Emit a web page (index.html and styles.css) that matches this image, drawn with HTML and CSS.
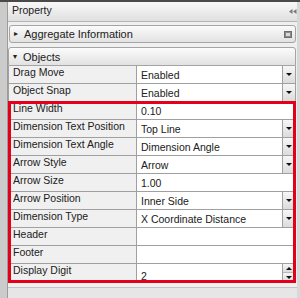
FILE: index.html
```html
<!DOCTYPE html>
<html lang="en">
<head>
    <meta charset="UTF-8">
    <title>Property</title>
    <link rel="stylesheet" href="styles.css">
</head>
<body>
    <div class="window">
        <div class="side"></div>
        <div class="panel">
            <div class="titlebar">
                <span>Property</span>
                <svg class="pin" width="8" height="5" viewBox="0 0 8 5"><path d="M0 2.5L3.5 0V5Z M4 2.5L7.5 0V5Z" fill="#7a7a7a"/></svg>
            </div>
            <div class="content">
                <div class="group">
                    <span class="caret">&#9656;</span>
                    <span class="group-title">Aggregate Information</span>
                    <svg class="restore" width="8" height="7" viewBox="0 0 8 7"><rect x="0.5" y="0.5" width="7" height="6" fill="#8c8c8c" stroke="#6e6e6e"/><rect x="2" y="2" width="4" height="3" fill="#d8d8d8"/></svg>
                </div>
                <div class="group open">
                    <span class="caret">&#9662;</span>
                    <span class="group-title">Objects</span>
                </div>
                <div class="grid">
                    <div class="row"><div class="name">Drag Move</div><div class="val">Enabled</div><div class="drop"><i class="down"></i></div></div>
                    <div class="row"><div class="name">Object Snap</div><div class="val">Enabled</div><div class="drop"><i class="down"></i></div></div>
                    <div class="marked">
                        <div class="row"><div class="name">Line Width</div><div class="val">0.10</div></div>
                        <div class="row"><div class="name">Dimension Text Position</div><div class="val">Top Line</div><div class="drop"><i class="down"></i></div></div>
                        <div class="row"><div class="name">Dimension Text Angle</div><div class="val">Dimension Angle</div><div class="drop"><i class="down"></i></div></div>
                        <div class="row"><div class="name">Arrow Style</div><div class="val">Arrow</div><div class="drop"><i class="down"></i></div></div>
                        <div class="row"><div class="name">Arrow Size</div><div class="val">1.00</div></div>
                        <div class="row"><div class="name">Arrow Position</div><div class="val">Inner Side</div><div class="drop"><i class="down"></i></div></div>
                        <div class="row"><div class="name">Dimension Type</div><div class="val">X Coordinate Distance</div><div class="drop"><i class="down"></i></div></div>
                        <div class="row"><div class="name">Header</div><div class="val"></div></div>
                        <div class="row"><div class="name">Footer</div><div class="val"></div></div>
                        <div class="row"><div class="name">Display Digit</div><div class="val low">2</div><div class="spin"><span><i class="up"></i></span><span><i class="down"></i></span></div></div>
                    </div>
                </div>
            </div>
            <div class="footer"></div>
        </div>
    </div>
</body>
</html>
```

FILE: styles.css
```css
* {
    box-sizing: border-box;
}
html,
body {
    margin: 0;
    padding: 0;
    width: 300px;
    height: 298px;
    overflow: hidden;
    background: #d8d8d8;
    font-family: 'Liberation Sans', Arial, sans-serif;
    font-size: 10.5px;
    color: #202020;
}
.window {
    display: flex;
    height: 298px;
    border-top: 2px solid #4a4a4a;
}
.side {
    width: 8px;
    background: #cbcbcb;
    border-right: 1px solid #9c9c9c;
}
.panel {
    width: 289px;
    display: flex;
    flex-direction: column;
    background: #f0f0f0;
}
.titlebar {
    height: 20px;
    display: flex;
    align-items: flex-start;
    justify-content: space-between;
    padding: 0 0 0 4px;
    line-height: 16px;
    background: linear-gradient(#f8f8f8, #e0e0e0);
    border-bottom: 1px solid #b4b4b4;
}
.titlebar .pin {
    margin: 7px 0 0 0;
}
.content {
    padding: 3px 1px 0 0;
}
.group {
    display: flex;
    align-items: center;
    height: 18px;
    margin-left: 1px;
    padding: 0 3px 0 4px;
    border: 1px solid #a4a4a4;
    border-radius: 3px;
    background: linear-gradient(#fbfbfb, #e2e2e2);
    font-size: 11px;
}
.group + .group {
    margin-top: 4px;
}
.group.open {
    height: 19px;
    margin-left: 0;
    border-radius: 3px 3px 0 0;
}
.caret {
    width: 10px;
    font-size: 8px;
    line-height: 10px;
    color: #222;
}
.group-title {
    flex: 1;
    line-height: 14px;
}
.grid {
    border-left: 1px solid #a0a0a0;
    border-right: 1px solid #a0a0a0;
}
.marked {
    outline: 3px solid #e2001a;
    outline-offset: -2px;
}
.row {
    display: flex;
    height: 18px;
    border-bottom: 1px solid #a0a0a0;
}
.name {
    width: 128px;
    padding-left: 4px;
    line-height: 12px;
    white-space: nowrap;
    background: #f0f0f0;
    border-right: 1px solid #a0a0a0;
}
.val {
    flex: 1;
    padding: 3px 0 0 4px;
    line-height: 12px;
    background: #fff;
    overflow: hidden;
}
.val.low {
    padding-top: 6px;
}
.drop {
    width: 13px;
    display: flex;
    align-items: center;
    justify-content: center;
    border-left: 1px solid #a0a0a0;
    background: linear-gradient(#f6f6f6, #dcdcdc);
}
.spin {
    width: 13px;
    display: flex;
    flex-direction: column;
    border-left: 1px solid #a0a0a0;
}
.spin span {
    flex: 1;
    display: flex;
    align-items: center;
    justify-content: center;
    background: linear-gradient(#f6f6f6, #dcdcdc);
}
.spin span + span {
    border-top: 1px solid #b8b8b8;
}
.down,
.up {
    width: 0;
    height: 0;
    border-left: 3px solid transparent;
    border-right: 3px solid transparent;
}
.down {
    border-top: 3px solid #111;
}
.up {
    border-bottom: 3px solid #111;
}
.footer {
    flex: 1;
    margin-top: 5px;
    background: #e6e6e6;
    border-top: 1px solid #c4c4c4;
}
```
